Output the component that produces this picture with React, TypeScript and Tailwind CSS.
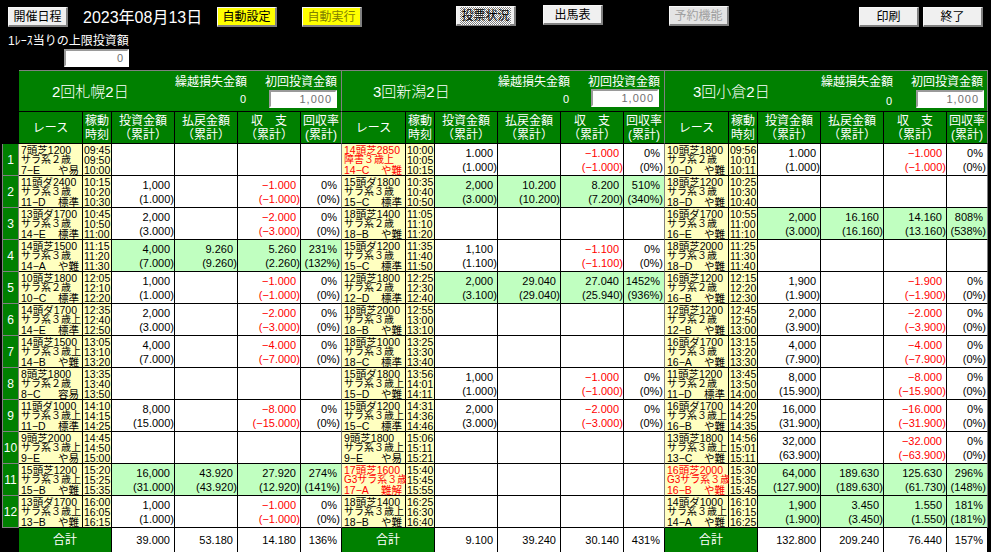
import type { ReactNode } from "react";

const rowGrid = "grid grid-cols-[64px_29px_63px_63px_63px_41px]";

type Race = {
  card: string;
  kind: string;
  code: string;
  cond: string;
  times: string;
  nums?: string[];
  red?: boolean;
};

// nums: invest, (invest), payout, (payout), balance, (balance), rate, (rate)
const loss = (a: string, b: string) => [
  a,
  `(${b})`,
  "",
  "",
  `−${a.replace(",", ".")}`,
  `(−${b})`,
  "0%",
  "(0%)",
];

const sections: { title: string; titleClass: string; zeroClass: string; inputClass: string; totals: string[]; races: Race[] }[] = [
  {
    title: "2回札幌2日",
    titleClass: "pl-[33px]",
    zeroClass: "mt-[3px]",
    inputClass: "ml-[4px] mt-[1px]",
    totals: ["39.000", "53.180", "14.180", "136%"],
    races: [
      { card: "7頭芝1200", kind: "サラ系２歳", code: "7−E", cond: "や易", times: "09:45 09:50 10:00" },
      { card: "11頭ダ2400", kind: "サラ系３歳", code: "11−D", cond: "標準", times: "10:15 10:20 10:30", nums: loss("1,000", "1.000") },
      { card: "13頭ダ1700", kind: "サラ系３歳", code: "14−E", cond: "標準", times: "10:45 10:50 11:00", nums: loss("2,000", "3.000") },
      { card: "14頭芝1500", kind: "サラ系３歳", code: "14−A", cond: "や難", times: "11:15 11:20 11:30", nums: ["4,000", "(7.000)", "9.260", "(9.260)", "5.260", "(2.260)", "231%", "(132%)"] },
      { card: "10頭芝1800", kind: "サラ系２歳", code: "10−C", cond: "標準", times: "12:05 12:10 12:20", nums: loss("1,000", "1.000") },
      { card: "14頭ダ1700", kind: "サラ系３歳上", code: "14−E", cond: "標準", times: "12:35 12:40 12:50", nums: loss("2,000", "3.000") },
      { card: "14頭芝1500", kind: "サラ系３歳上", code: "14−B", cond: "や難", times: "13:05 13:10 13:20", nums: loss("4,000", "7.000") },
      { card: "8頭芝1800", kind: "サラ系２歳", code: "8−C", cond: "容易", times: "13:35 13:40 13:50" },
      { card: "11頭ダ1000", kind: "サラ系３歳上", code: "11−D", cond: "標準", times: "14:10 14:15 14:25", nums: loss("8,000", "15.000") },
      { card: "9頭芝2000", kind: "サラ系３歳上", code: "9−E", cond: "や易", times: "14:45 14:50 15:00" },
      { card: "15頭芝1200", kind: "サラ系３歳上", code: "15−B", cond: "や難", times: "15:20 15:25 15:35", nums: ["16,000", "(31.000)", "43.920", "(43.920)", "27.920", "(12.920)", "274%", "(141%)"] },
      { card: "13頭ダ1700", kind: "サラ系３歳上", code: "13−B", cond: "や難", times: "16:00 16:05 16:15", nums: loss("1,000", "1.000") },
    ],
  },
  {
    title: "3回新潟2日",
    titleClass: "pl-[31px]",
    zeroClass: "mt-[3px]",
    inputClass: "ml-[3px] mt-0",
    totals: ["9.100", "39.240", "30.140", "431%"],
    races: [
      { card: "14頭芝2850", kind: "障害３歳上", code: "14−C", cond: "や難", times: "10:00 10:05 10:15", red: true, nums: loss("1.000", "1.000") },
      { card: "15頭ダ1800", kind: "サラ系３歳", code: "15−C", cond: "標準", times: "10:35 10:40 10:50", nums: ["2,000", "(3.000)", "10.200", "(10.200)", "8.200", "(7.200)", "510%", "(340%)"] },
      { card: "18頭芝1400", kind: "サラ系２歳", code: "18−B", cond: "や難", times: "11:05 11:10 11:20" },
      { card: "15頭ダ1200", kind: "サラ系３歳", code: "15−C", cond: "標準", times: "11:35 11:40 11:50", nums: loss("1,100", "1.100") },
      { card: "12頭芝1800", kind: "サラ系２歳", code: "12−D", cond: "標準", times: "12:25 12:30 12:40", nums: ["2,000", "(3.100)", "29.040", "(29.040)", "27.040", "(25.940)", "1452%", "(936%)"] },
      { card: "18頭芝2000", kind: "サラ系３歳", code: "18−B", cond: "や難", times: "12:55 13:00 13:10" },
      { card: "18頭芝1000", kind: "サラ系３歳", code: "18−C", cond: "標準", times: "13:25 13:30 13:40" },
      { card: "15頭ダ1800", kind: "サラ系３歳上", code: "15−D", cond: "や難", times: "13:56 14:01 14:11", nums: loss("1,000", "1.000") },
      { card: "15頭ダ1200", kind: "サラ系３歳上", code: "15−C", cond: "標準", times: "14:31 14:36 14:46", nums: loss("2,000", "3.000") },
      { card: "9頭芝1800", kind: "サラ系３歳上", code: "9−E", cond: "や易", times: "15:06 15:11 15:21" },
      { card: "17頭芝1600", kind: "G3サラ系３歳", code: "17−A", cond: "難解", times: "15:40 15:45 15:55", red: true },
      { card: "18頭芝1400", kind: "サラ系３歳上", code: "18−B", cond: "や難", times: "16:25 16:30 16:40" },
    ],
  },
  {
    title: "3回小倉2日",
    titleClass: "pl-[28px]",
    zeroClass: "mt-[5px]",
    inputClass: "ml-[5px] mt-[1px]",
    totals: ["132.800", "209.240", "76.440", "157%"],
    races: [
      { card: "10頭芝1800", kind: "サラ系２歳", code: "10−D", cond: "や難", times: "09:56 10:01 10:11", nums: loss("1.000", "1.000") },
      { card: "18頭芝1200", kind: "サラ系３歳", code: "18−D", cond: "や難", times: "10:25 10:30 10:40" },
      { card: "16頭ダ1700", kind: "サラ系３歳", code: "16−E", cond: "や難", times: "10:55 11:00 11:10", nums: ["2,000", "(3.000)", "16.160", "(16.160)", "14.160", "(13.160)", "808%", "(538%)"] },
      { card: "18頭芝2000", kind: "サラ系３歳", code: "18−D", cond: "や難", times: "11:25 11:30 11:40" },
      { card: "16頭芝1200", kind: "サラ系２歳", code: "16−B", cond: "や難", times: "12:15 12:20 12:30", nums: loss("1,900", "1.900") },
      { card: "12頭芝1200", kind: "サラ系２歳", code: "12−B", cond: "や難", times: "12:45 12:50 13:00", nums: loss("2,000", "3.900") },
      { card: "16頭ダ1700", kind: "サラ系３歳", code: "16−A", cond: "や難", times: "13:15 13:20 13:30", nums: loss("4,000", "7.900") },
      { card: "11頭芝1200", kind: "サラ系２歳", code: "11−D", cond: "標準", times: "13:45 13:50 14:00", nums: loss("8,000", "15.900") },
      { card: "16頭ダ1700", kind: "サラ系３歳上", code: "16−B", cond: "や難", times: "14:20 14:25 14:35", nums: loss("16,000", "31.900") },
      { card: "13頭芝1800", kind: "サラ系３歳上", code: "13−C", cond: "や難", times: "14:56 15:01 15:11", nums: loss("32,000", "63.900") },
      { card: "16頭芝2000", kind: "G3サラ系３歳", code: "16−B", cond: "や難", times: "15:30 15:35 15:45", red: true, nums: ["64,000", "(127.900)", "189.630", "(189.630)", "125.630", "(61.730)", "296%", "(148%)"] },
      { card: "14頭ダ1000", kind: "サラ系３歳上", code: "14−A", cond: "や難", times: "16:10 16:15 16:25", nums: ["1,900", "(1.900)", "3.450", "(3.450)", "1.550", "(1.550)", "181%", "(181%)"] },
    ],
  },
];

const Btn = ({ label, className }: { label: ReactNode; className: string }) => (
  <button
    className={`flex h-[20px] w-[60px] flex-none items-center justify-center border border-r-2 border-b-2 border-t-[#f8f8f8] border-l-[#f8f8f8] border-r-[#808080] border-b-[#808080] text-[12px] ${className}`}
  >
    {label}
  </button>
);

const Sunken = ({ value, className }: { value: string; className: string }) => (
  <input
    readOnly
    value={value}
    className={`block h-[18px] border-2 border-t-[#9a9a9a] border-l-[#9a9a9a] border-r-white border-b-white bg-white pr-[3px] text-right text-[11px] tracking-[1px] text-[#707070] outline-none ${className}`}
  />
);

const SectionHeader = ({ s }: { s: (typeof sections)[number] }) => (
  <div className="flex h-[42px] w-[323px] border-t border-r border-b border-t-[#808080] border-r-[#808080] border-b-black bg-[#008000] text-white">
    <div className={`w-[156px] flex-none pt-[11px] text-[15px] leading-[20px] font-light ${s.titleClass}`}>{s.title}</div>
    <div className="w-[90px] flex-none pt-[4px] text-[12px] leading-[14px]">
      <div>繰越損失金額</div>
      <div className={`w-[71px] text-right text-[11px] ${s.zeroClass}`}>0</div>
    </div>
    <div className="w-[76px] flex-none pt-[4px] text-[12px] leading-[14px]">
      <div>初回投資金額</div>
      <Sunken value="1,000" className={`w-[68px] ${s.inputClass}`} />
    </div>
  </div>
);

const ColumnHeads = () => (
  <div className={`${rowGrid} h-[32px] bg-[#008000] text-center text-[12px] leading-[14px] text-white`}>
    <div className="flex items-center justify-center border-r border-b border-black">レース</div>
    <div className="border-r border-b border-black pt-[2px]">稼動<br />時刻</div>
    <div className="border-r border-b border-black pt-[2px]">投資金額<br />（累計）</div>
    <div className="border-r border-b border-black pt-[2px]">払戻金額<br />（累計）</div>
    <div className="border-r border-b border-black pt-[2px]">収　支<br />（累計）</div>
    <div className="border-r border-b border-r-[#808080] border-b-black pt-[2px] whitespace-nowrap">回収率<br />(累計)</div>
  </div>
);

const NumCell = ({ top, bottom, red, win, last }: { top: string; bottom: string; red?: boolean; win: boolean; last?: boolean }) => (
  <div
    className={`flex flex-col items-end border-r border-b border-b-black pt-[2px] text-[11px] leading-[14px] ${last ? "border-r-[#808080]" : "border-r-black"} ${win ? "bg-[#c0ffc0]" : "bg-white"} ${red ? "text-[#ff0000]" : "text-black"}`}
  >
    <div className="pr-[4px]">{top}</div>
    <div className={last ? "pr-[1px]" : "pr-0"}>{bottom}</div>
  </div>
);

const RaceRow = ({ race }: { race: Race }) => {
  const n = race.nums ?? ["", "", "", "", "", "", "", ""];
  const win = n[2] !== "";
  return (
    <div className={`${rowGrid} h-[32px]`}>
      <div className={`border-r border-b border-black bg-[#ffffc0] pl-[2px] pt-[1px] text-[10.5px] leading-[10px] whitespace-nowrap ${race.red ? "text-[#ff0000]" : "text-black"}`}>
        <div>{race.card}</div>
        <div className="text-[10px]">{race.kind}</div>
        <div className="flex justify-between pr-[3px]">
          <span>{race.code}</span>
          <span>{race.cond}</span>
        </div>
      </div>
      <div className="border-r border-b border-black bg-[#ffffc0] pl-[1px] pt-[1px] text-[10.5px] leading-[10px] text-black">
        {race.times.split(" ").map((t) => (
          <div key={t}>{t}</div>
        ))}
      </div>
      <NumCell top={n[0]} bottom={n[1]} win={win} />
      <NumCell top={n[2]} bottom={n[3]} win={win} />
      <NumCell top={n[4]} bottom={n[5]} win={win} red={n[4].startsWith("−")} />
      <NumCell top={n[6]} bottom={n[7]} win={win} last />
    </div>
  );
};

const TotalRow = ({ totals }: { totals: string[] }) => (
  <div className={`${rowGrid} h-[24px]`}>
    <div className="col-span-2 flex items-center justify-center border-r border-black bg-[#008000] text-[12px] text-white">合計</div>
    {totals.map((t) => (
      <div key={t} className="border-r border-black bg-white pt-[5px] pr-[4px] text-right text-[11px] leading-[14px] text-black">
        {t}
      </div>
    ))}
  </div>
);

export default function App() {
  return (
    <div className="h-[552px] w-[991px] overflow-hidden bg-black font-['Liberation_Sans','Noto_Sans_CJK_JP',sans-serif]">
      <div className="flex h-[34px] items-start">
        <Btn label="開催日程" className="mt-[7px] ml-[8px] bg-[#f0f0f0] text-black" />
        <div className="mt-[8px] ml-[15px] w-[134px] flex-none text-[16px] leading-[20px] text-white">2023年08月13日</div>
        <Btn label="自動設定" className="mt-[7px] bg-[#ffff00] text-black" />
        <Btn label="自動実行" className="mt-[7px] ml-[25px] bg-[#ffff00] text-[#808000]" />
        <Btn
          label={<span className="bg-[repeating-conic-gradient(#808080_0_25%,#ffffff_0_50%)] bg-[length:2px_2px] px-[1px] text-black">投票状況</span>}
          className="mt-[6px] ml-[94px] bg-[#f0f0f0]"
        />
        <Btn label="出馬表" className="mt-[5px] ml-[27px] bg-[#f0f0f0] text-black" />
        <Btn label="予約機能" className="mt-[6px] ml-[66px] bg-[#e4e4e4] text-[#a0a0a0]" />
        <Btn label="印刷" className="mt-[7px] ml-[130px] bg-[#f0f0f0] text-black" />
        <Btn label="終了" className="mt-[7px] ml-[4px] bg-[#f0f0f0] text-black" />
      </div>
      <div className="pt-[1px] pl-[8px] text-[12px] leading-[12px] text-white">1ﾚｰｽ当りの上限投資額</div>
      <Sunken value="0" className="mt-[2px] ml-[64px] w-[65px]" />

      <div className="mt-[3px] flex">
        <div className="w-[19px] flex-none" />
        {sections.map((s) => (
          <SectionHeader key={s.title} s={s} />
        ))}
      </div>
      <div className="flex">
        <div className="w-[19px] flex-none" />
        {sections.map((s) => (
          <ColumnHeads key={s.title} />
        ))}
      </div>
      {sections[0].races.map((_, i) => (
        <div key={i} className="flex">
          <div className="ml-[2px] flex h-[32px] w-[17px] flex-none items-center justify-center border-x border-b border-[#808080] bg-[#008000] text-[12px] text-white">
            {i + 1}
          </div>
          {sections.map((s) => (
            <RaceRow key={s.title} race={s.races[i]} />
          ))}
        </div>
      ))}
      <div className="flex pl-[19px]">
        {sections.map((s) => (
          <TotalRow key={s.title} totals={s.totals} />
        ))}
      </div>
    </div>
  );
}
